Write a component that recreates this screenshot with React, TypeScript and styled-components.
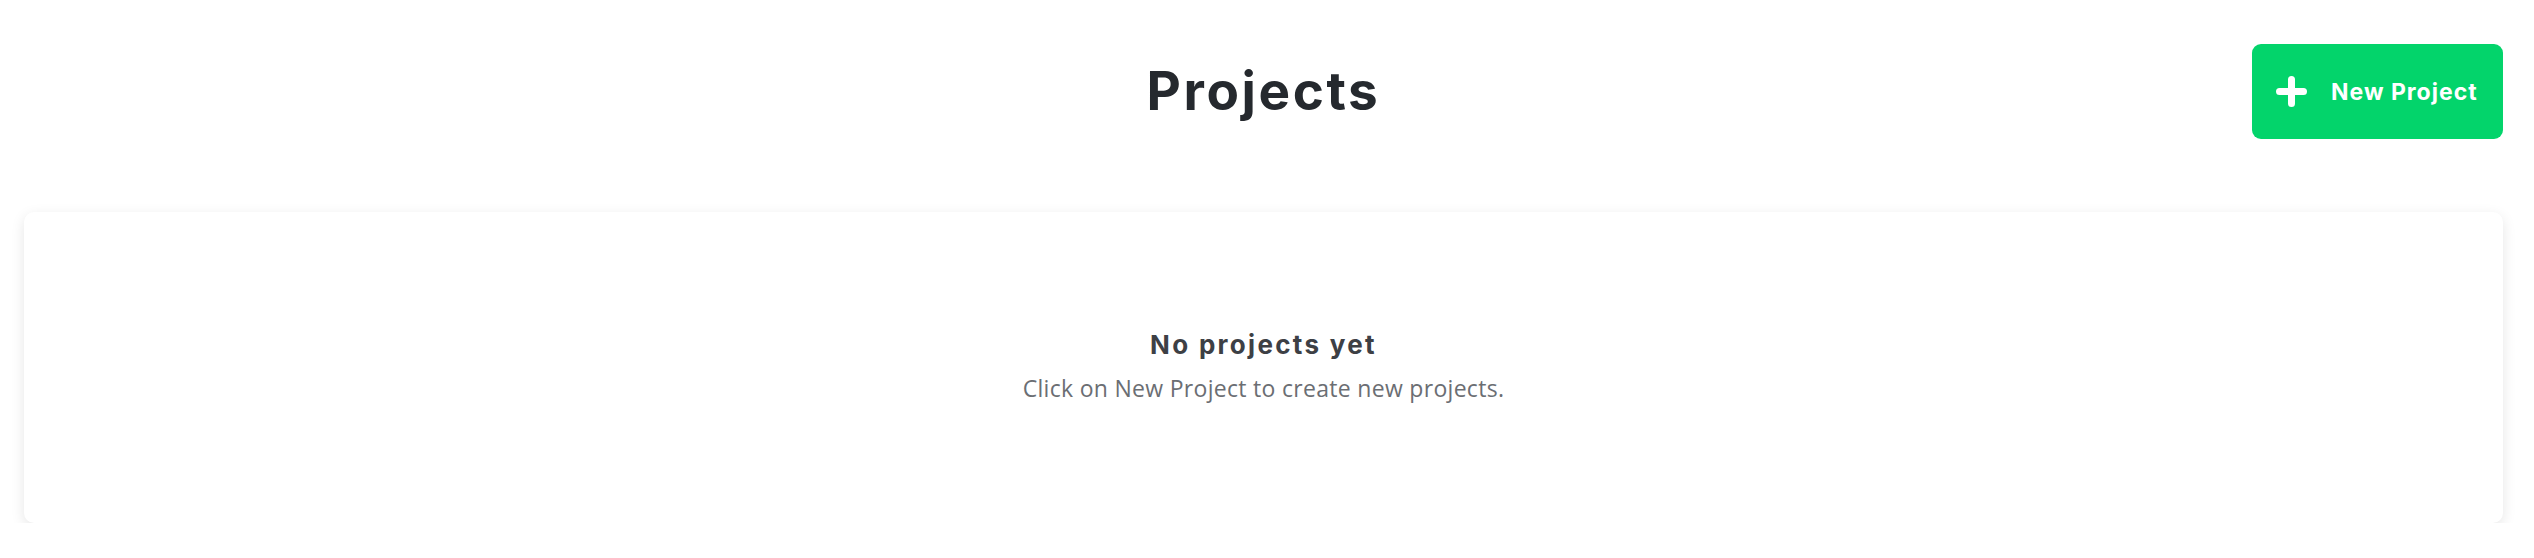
import React from "react";
import styled, { createGlobalStyle } from "styled-components";

const GlobalStyle = createGlobalStyle`
  html, body { margin: 0; padding: 0; background: #ffffff; }
  body { font-family: "Inter", "Liberation Sans", sans-serif; }
  * { box-sizing: border-box; }
`;

const Page = styled.div`
  padding: 44px 31px 0 24px;
  display: flex;
  flex-direction: column;
  gap: 73px;
`;

const Header = styled.header`
  display: grid;
  grid-template-columns: 1fr auto 1fr;
  align-items: center;
  height: 95px;
`;

const Title = styled.h1`
  grid-column: 2;
  margin: 0;
  font-family: "Inter", sans-serif;
  font-weight: 700;
  font-size: 53px;
  letter-spacing: 2.6px;
  color: #25292e;
  line-height: 1;
`;

const PrimaryButton = styled.button`
  grid-column: 3;
  justify-self: end;
  display: flex;
  align-items: center;
  gap: 24px;
  height: 95px;
  width: 251px;
  padding: 0 0 0 24px;
  border: none;
  border-radius: 9px;
  background: #03d46b;
  color: #ffffff;
  font-family: "Inter", sans-serif;
  font-weight: 700;
  font-size: 23px;
  letter-spacing: 1px;
  white-space: nowrap;
  cursor: pointer;
`;

const Card = styled.section`
  height: 311px;
  border-radius: 10px;
  background: #ffffff;
  box-shadow: 0 4px 14px rgba(0, 0, 0, 0.1);
  display: flex;
  flex-direction: column;
  align-items: center;
  justify-content: center;
  gap: 13px;
  padding-bottom: 2px;
`;

const EmptyTitle = styled.h2`
  margin: 0;
  font-family: "Inter", sans-serif;
  font-weight: 700;
  font-size: 26px;
  letter-spacing: 2.3px;
  color: #3d4045;
  line-height: 1.2;
`;

const EmptyText = styled.p`
  margin: 0;
  font-family: "Open Sans", sans-serif;
  font-weight: 400;
  font-size: 23px;
  letter-spacing: 0.3px;
  color: #6b6e73;
  line-height: 1.3;
`;

const PlusIcon = () => (
  <svg width="31" height="31" viewBox="0 0 31 31" fill="none">
    <path d="M15.5 3.5v24M3.5 15.5h24" stroke="#ffffff" strokeWidth="7" strokeLinecap="round" />
  </svg>
);

export default function App() {
  return (
    <>
      <GlobalStyle />
      <Page>
        <Header>
          <Title>Projects</Title>
          <PrimaryButton>
            <PlusIcon />
            New Project
          </PrimaryButton>
        </Header>
        <Card>
          <EmptyTitle>No projects yet</EmptyTitle>
          <EmptyText>Click on New Project to create new projects.</EmptyText>
        </Card>
      </Page>
    </>
  );
}
